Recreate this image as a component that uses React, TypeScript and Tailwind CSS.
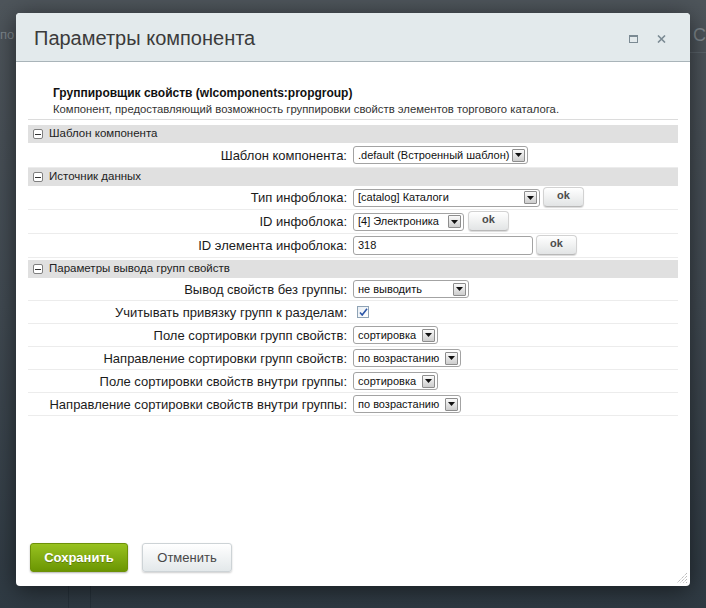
import { ReactNode } from 'react'

const sans = { fontFamily: '"Liberation Sans", Arial, sans-serif' }

function Arrow() {
  return (
    <span className="mr-[2px] flex h-[13px] w-[13px] items-center justify-center rounded-[1px] border border-[#8d8d8d] bg-gradient-to-b from-[#fafafa] to-[#cdcdcd]">
      <svg width="7" height="4" viewBox="0 0 7 4">
        <path d="M0 0h7L3.5 4z" fill="#111" />
      </svg>
    </span>
  )
}

function Select({ w, text }: { w: string; text: string }) {
  return (
    <div className={`flex h-[18px] items-center rounded-[3px] border border-[#a3a3a3] bg-white ${w}`}>
      <span className="flex-1 truncate pl-[4px] text-[11px] leading-none text-[#111]">{text}</span>
      <Arrow />
    </div>
  )
}

function Ok({ ml }: { ml: string }) {
  return (
    <button
      className={`flex h-[20px] w-[41px] items-start justify-center rounded-[4px] border border-[#d2d2d2] border-b-[#b8b8b8] bg-gradient-to-b from-[#ffffff] to-[#e2e4e5] pt-[1px] text-[11px] leading-[12px] font-bold text-[#4d4d4d] shadow-[0_1px_1px_rgba(0,0,0,0.15)] ${ml}`}
    >
      ok
    </button>
  )
}

function Section({ title }: { title: string }) {
  return (
    <div className="flex h-[18px] items-center bg-[#e0e0e0] pl-[5px] text-[11.5px] text-[#222]">
      <span className="mr-[6px] flex h-[10px] w-[10px] items-center justify-center rounded-[2px] border border-[#7f7f7f] bg-white">
        <span className="h-px w-[6px] bg-[#333]" />
      </span>
      {title}
    </div>
  )
}

function Row({ label, h = 'h-[23px]', children }: { label: string; h?: string; children: ReactNode }) {
  return (
    <div className={`flex items-center border-b border-[#ececec] ${h}`}>
      <div className="w-[319px] text-right text-[13px] leading-none text-[#1b1b1b]">{label}</div>
      <div className="flex items-center pl-[6px]">{children}</div>
    </div>
  )
}

export default function App() {
  return (
    <div
      className="relative h-[608px] w-[706px] overflow-hidden bg-gradient-to-b from-[#4e555b] via-[#414a52] to-[#2f3a43] pt-[13px] pl-[16px]"
      style={sans}
    >
      <div className="absolute top-[25px] left-[0px] text-[13px] text-[#7e868c]">по</div>
      <div className="absolute top-[22px] left-[693px] text-[18px] text-[#7e868c]">С</div>
      <div className="absolute top-[52px] left-[690px] h-px w-[16px] bg-[#5a636a]" />
      <div className="absolute top-[586px] left-[68px] h-[22px] w-px bg-[#26313a]" />
      <div className="absolute top-[586px] left-[90px] h-[22px] w-px bg-[#26313a]" />

      <div className="relative flex h-[573px] w-[674px] flex-col rounded-[4px] bg-white shadow-[0_4px_24px_rgba(0,0,0,0.55)]">
        <div className="flex h-[49px] items-center rounded-t-[4px] border-b border-[#a9b4b9] bg-[#e3eaec] pl-[18px]">
          <div className="flex-1 pt-[2px] text-[20px] text-[#3b3b3b]">Параметры компонента</div>
          <svg width="9" height="8" viewBox="0 0 9 8" className="mr-[19px] mt-[3px]">
            <rect x="0.5" y="0.5" width="8" height="7" fill="none" stroke="#7b8a93" />
            <rect x="0" y="0" width="9" height="2" fill="#7b8a93" />
          </svg>
          <svg width="9" height="8" viewBox="0 0 9 8" className="mr-[24px] mt-[3px]">
            <path d="M1 0.5l7 7M8 0.5l-7 7" stroke="#7b8a93" strokeWidth="1.6" />
          </svg>
        </div>

        <div className="flex-1 px-[12px] pt-[24px]">
          <div className="pl-[25px]">
            <div className="text-[12px] leading-[15px] font-bold text-[#111]">
              Группировщик свойств (wlcomponents:propgroup)
            </div>
            <div className="mt-[1px] text-[11.3px] leading-[14px] text-[#333]">
              Компонент, предоставляющий возможность группировки свойств элементов торгового каталога.
            </div>
          </div>
          <div className="mt-[3px] mb-[5px] h-px bg-[#dcdcdc]" />

          <Section title="Шаблон компонента" />
          <Row label="Шаблон компонента:" h="h-[25px]">
            <Select w="w-[175px]" text=".default (Встроенный шаблон)" />
          </Row>

          <Section title="Источник данных" />
          <Row label="Тип инфоблока:" h="h-[24px]">
            <Select w="w-[187px]" text="[catalog] Каталоги" />
            <Ok ml="ml-[3px] -mt-[2px]" />
          </Row>
          <Row label="ID инфоблока:" h="h-[24px]">
            <Select w="w-[111px]" text="[4] Электроника" />
            <Ok ml="ml-[4px] -mt-[2px]" />
          </Row>
          <Row label="ID элемента инфоблока:" h="h-[24px]">
            <div className="flex h-[19px] w-[180px] items-center rounded-[3px] border border-[#a3a3a3] bg-white pl-[4px] text-[11px] text-[#111]">
              318
            </div>
            <Ok ml="ml-[3px] -mt-[2px]" />
          </Row>

          <div className="h-[2px]" />
          <Section title="Параметры вывода групп свойств" />
          <Row label="Вывод свойств без группы:">
            <Select w="w-[116px]" text="не выводить" />
          </Row>
          <Row label="Учитывать привязку групп к разделам:">
            <span className="ml-[4px] flex h-[12px] w-[12px] items-center justify-center border border-[#8fa3b5] bg-gradient-to-br from-[#e8eef4] to-[#ffffff]">
              <svg width="9" height="8" viewBox="0 0 9 8">
                <path d="M1 4.5l2.2 2.5L8 0.8" fill="none" stroke="#2b56a8" strokeWidth="1.6" />
              </svg>
            </span>
          </Row>
          <Row label="Поле сортировки групп свойств:">
            <Select w="w-[85px]" text="сортировка" />
          </Row>
          <Row label="Направление сортировки групп свойств:">
            <Select w="w-[108px]" text="по возрастанию" />
          </Row>
          <Row label="Поле сортировки свойств внутри группы:">
            <Select w="w-[85px]" text="сортировка" />
          </Row>
          <Row label="Направление сортировки свойств внутри группы:">
            <Select w="w-[108px]" text="по возрастанию" />
          </Row>
        </div>

        <div className="flex items-center gap-[14px] px-[14px] pb-[14px]">
          <button className="h-[29px] w-[98px] rounded-[3px] border border-[#6d9108] bg-gradient-to-b from-[#98c21f] to-[#6b9602] text-[13px] font-bold text-white shadow-[0_1px_2px_rgba(0,0,0,0.3)] [text-shadow:0_1px_0_rgba(0,0,0,0.25)]">
            Сохранить
          </button>
          <button className="h-[29px] w-[90px] rounded-[3px] border border-[#cdd3d6] bg-gradient-to-b from-[#ffffff] to-[#e3e8ea] text-[13px] text-[#474747] shadow-[0_1px_2px_rgba(0,0,0,0.2)]">
            Отменить
          </button>
        </div>

        <svg width="14" height="14" viewBox="0 0 14 14" className="absolute right-[2px] bottom-[2px]">
          <path d="M13 3L3 13M13 6L6 13M13 9L9 13M13 12L12 13" stroke="#a0a0a0" strokeWidth="1" strokeDasharray="1 1" />
        </svg>
      </div>
    </div>
  )
}
